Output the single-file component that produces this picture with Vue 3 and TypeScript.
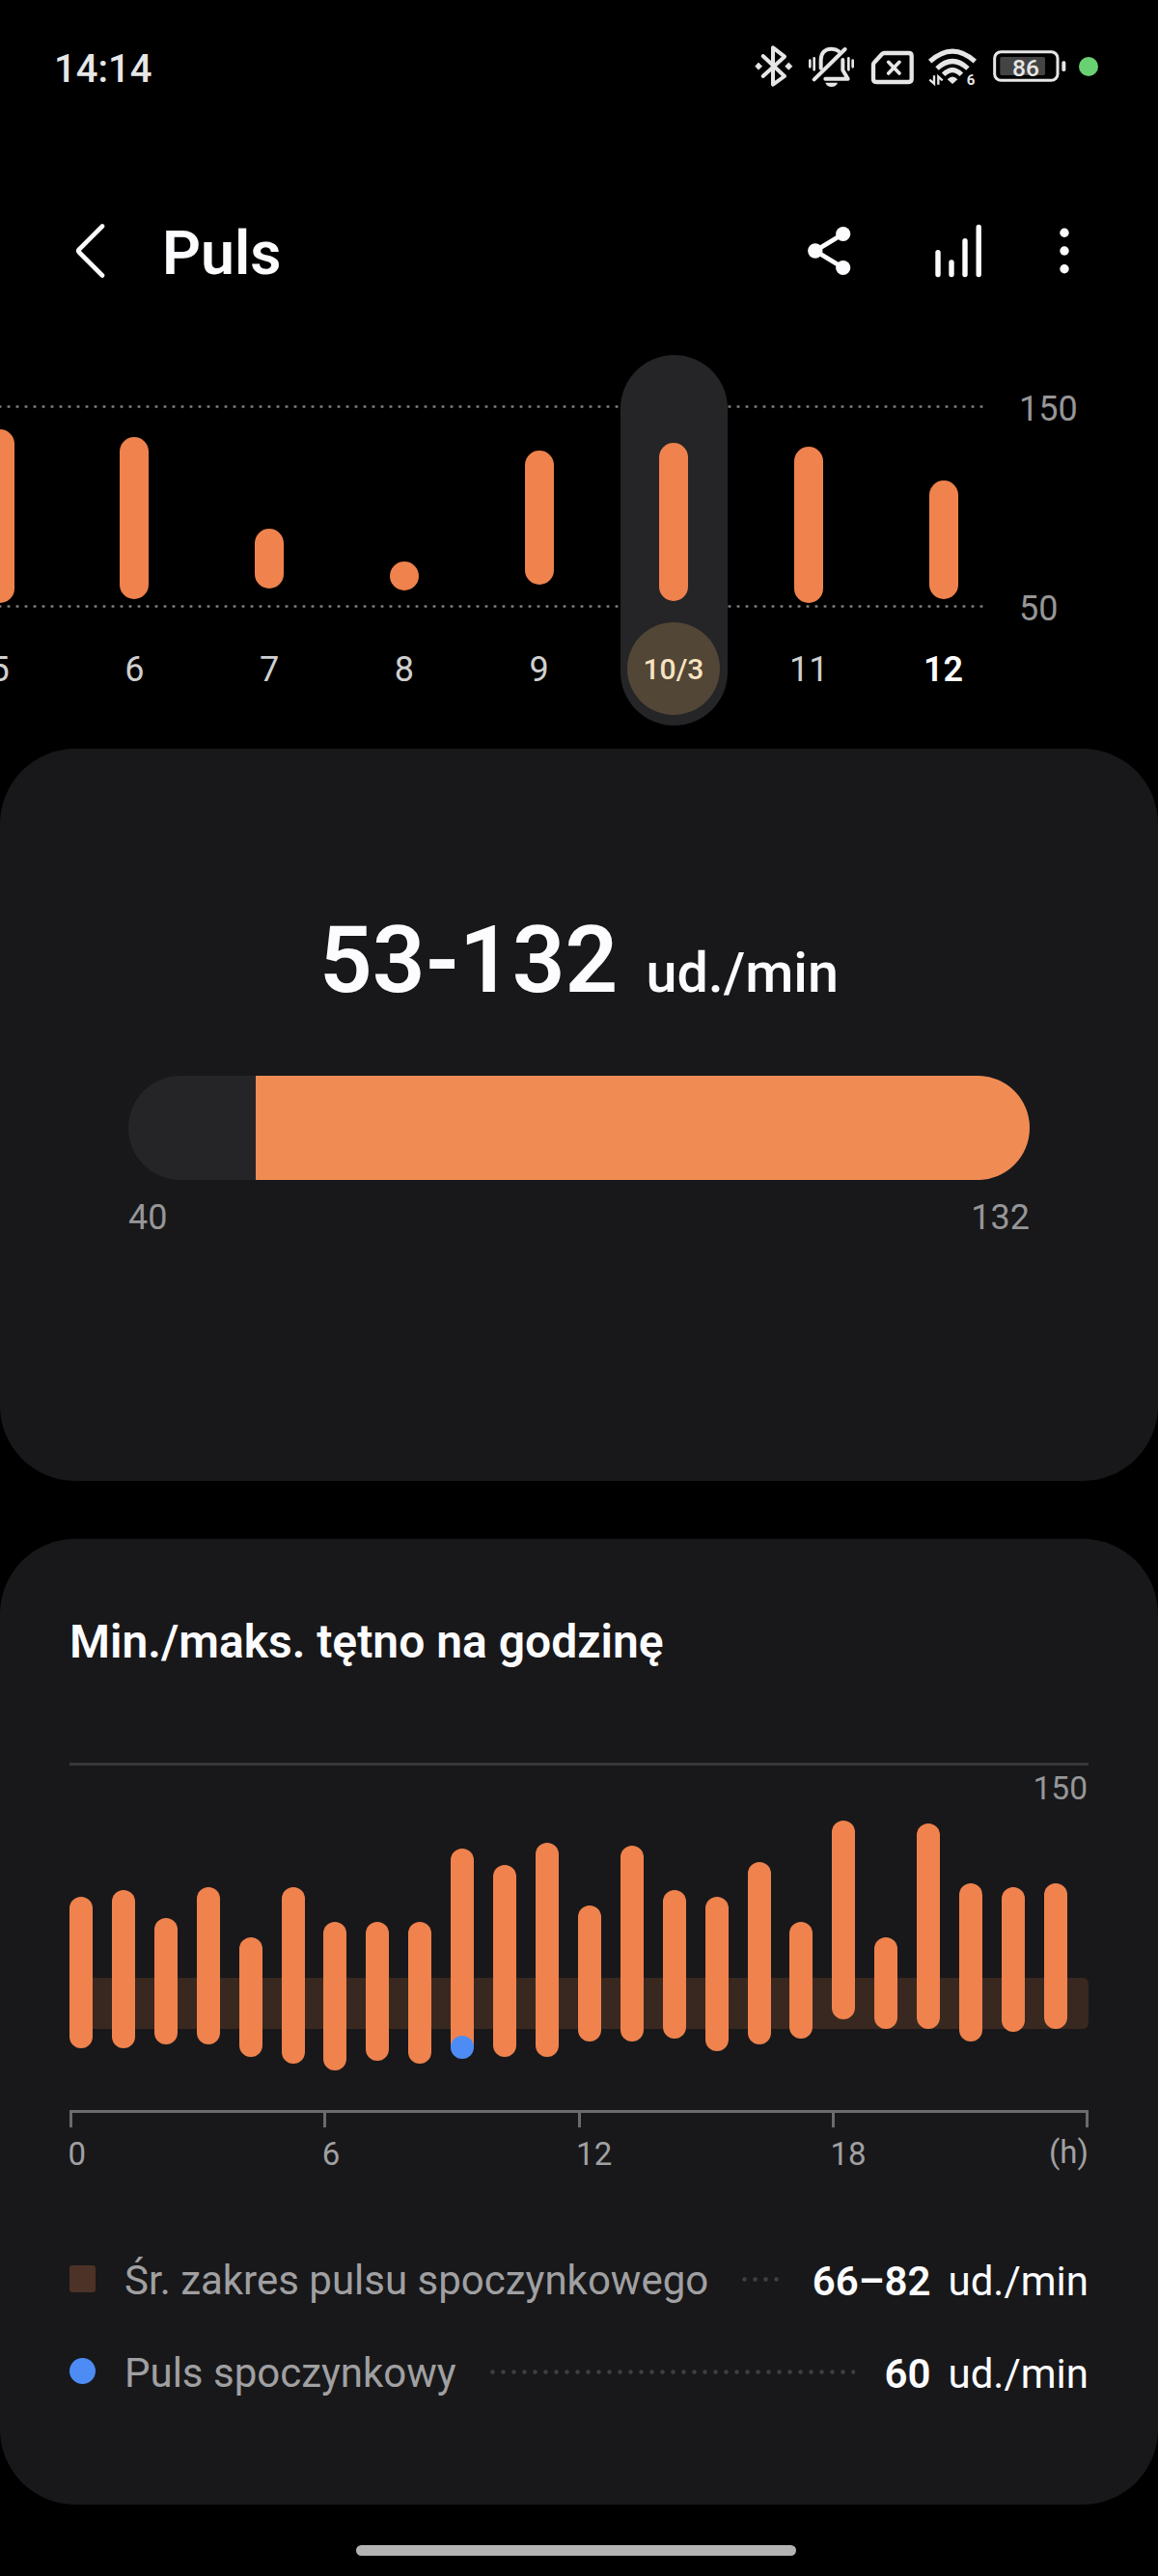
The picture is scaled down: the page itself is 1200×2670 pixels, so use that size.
<script setup lang="ts">
interface Range {
  min: number
  max: number
}

interface Day extends Range {
  label: string
  selected?: boolean
  today?: boolean
}

const days: Day[] = [
  { label: '5', min: 52, max: 139 },
  { label: '6', min: 54, max: 135.2 },
  { label: '7', min: 59, max: 89 },
  { label: '8', min: 58, max: 72.6 },
  { label: '9', min: 61, max: 128.2 },
  { label: '10/3', min: 53, max: 132, selected: true },
  { label: '11', min: 52, max: 130 },
  { label: '12', min: 54, max: 113.2, today: true },
]

const hourPairs: [number, number][] = [
  [60, 108], [60, 110], [61, 101], [61, 111], [57, 95], [55, 111],
  [53, 100], [56, 100], [55, 100], [57, 123], [57, 118], [57, 125],
  [62, 105], [62, 124], [63, 110], [59, 108], [61, 119], [63, 100],
  [69, 132], [66, 95], [66, 131], [62, 112], [65, 111], [66, 112],
]
const hours: Range[] = hourPairs.map(([min, max]) => ({ min, max }))
const restingHour = 9

const DAY_SCALE = 2.07
const HOUR_SCALE = 3.274

function barStyle(r: Range, scale: number, offset: number) {
  return {
    marginTop: `${(offset + (150 - r.max) * scale).toFixed(1)}px`,
    height: `${((r.max - r.min) * scale).toFixed(1)}px`,
  }
}

const rangeStart = ((53 - 40) / (132 - 40)) * 100
</script>

<template>
  <div class="screen">
    <header class="status">
      <span class="clock">14:14</span>
      <div class="status-icons">
        <svg width="44" height="80" viewBox="60 0 132 240">
          <path d="M92 84 L159 147 L123 173 V58 L159 86 L92 147" fill="none" stroke="#e6e6e6" stroke-width="12" stroke-linecap="round" stroke-linejoin="round" />
          <path d="M68 116 L78 105 L89 116 L78 127Z M161 116 L172 105 L183 116 L172 127Z" fill="#e6e6e6" stroke="#e6e6e6" stroke-width="2" stroke-linejoin="round" />
        </svg>
        <svg width="64" height="80" viewBox="210 0 192 240">
          <g fill="none" stroke="#e6e6e6" stroke-linecap="round" stroke-linejoin="round">
            <path d="M238 98 V118 M251 91 V127 M358 91 V127 M371 98 V118" stroke-width="8" />
            <path d="M272 122 V97 C272 73 286 62 305 62 C314 62 321 64 327 69" stroke-width="12" />
            <path d="M251 157 L347 63" stroke-width="12" />
            <path d="M340 96 V128 L356 155 H286" stroke-width="12" />
          </g>
          <path d="M286 167 H324 Q319 180 305 180 Q291 180 286 167Z" fill="#e6e6e6" />
        </svg>
        <svg width="56" height="80" viewBox="410 0 168 240">
          <g fill="none" stroke="#e6e6e6" stroke-linejoin="round" stroke-linecap="round">
            <path d="M468 75 H544 Q553 75 553 84 V156 Q553 165 544 165 H443 Q434 165 434 156 V112 Q434 107 437 104 L461 78 Q464 75 468 75Z" stroke-width="13" />
            <path d="M481 103 L515 138 M515 103 L481 138" stroke-width="11" />
          </g>
        </svg>
        <svg width="60" height="80" viewBox="595 0 180 240">
          <g fill="none" stroke="#e6e6e6" stroke-linecap="butt">
            <path d="M612 101 Q682 38 752 101" stroke-width="15" />
            <path d="M634 123 Q682 78 730 123" stroke-width="15" />
            <path d="M654 142 Q682 114 710 142" stroke-width="15" />
            <path d="M625 145 V170 L611 158 M638 173 V148 L651 160" stroke-width="7" />
          </g>
          <path d="M666 157 Q682 140 698 157 L682 171Z" fill="#e6e6e6" />
          <text x="726" y="173" class="wifi-gen">6</text>
        </svg>
        <svg width="84" height="80" viewBox="794 0 252 240">
          <rect x="811" y="71" width="196" height="89" rx="20" fill="none" stroke="#e6e6e6" stroke-width="9" />
          <rect x="828" y="87" width="140" height="57" rx="5" fill="#444" />
          <rect x="1020" y="100" width="12" height="32" rx="5" fill="#e6e6e6" />
          <text x="866" y="147" textLength="84" lengthAdjust="spacingAndGlyphs" class="battery">86</text>
        </svg>
        <i class="privacy-dot"></i>
      </div>
    </header>

    <nav class="appbar">
      <svg class="back" width="40" height="120" viewBox="0 0 40 120">
        <path d="M32 34.5 L8 58.5 Q6.5 60 8 61.5 L32 85.5" fill="none" stroke="#fcfcff" stroke-width="4.6" stroke-linecap="round" stroke-linejoin="round" />
      </svg>
      <h1>Puls</h1>
      <svg class="share" width="54" height="120" viewBox="0 0 54 120">
        <path d="M43.7 42.5 L14.8 60 L43.7 77.5" fill="none" stroke="#fcfcff" stroke-width="4.8" />
        <g fill="#fcfcff">
          <circle cx="14.8" cy="60" r="7.7" />
          <circle cx="43.7" cy="42.5" r="7.6" />
          <circle cx="43.7" cy="77.5" r="7.6" />
        </g>
      </svg>
      <svg class="trend" width="60" height="120" viewBox="0 0 60 120">
        <path d="M12 61.7 V84.5 M26 72 V84.5 M40 49.7 V84.5 M54.2 35.5 V84.5" stroke="#fcfcff" stroke-width="5.4" stroke-linecap="round" />
      </svg>
      <svg class="more" width="20" height="120" viewBox="0 0 20 120">
        <g fill="#fcfcff">
          <circle cx="10" cy="41.3" r="4.7" />
          <circle cx="10" cy="60" r="4.7" />
          <circle cx="10" cy="78.7" r="4.7" />
        </g>
      </svg>
    </nav>

    <section class="week">
      <ul class="days">
        <li v-for="d in days" :key="d.label">
          <div class="day" :class="{ selected: d.selected, today: d.today }">
            <div class="day-plot">
              <i class="day-bar" :style="barStyle(d, DAY_SCALE, 54)"></i>
            </div>
            <span class="day-label">{{ d.label }}</span>
          </div>
        </li>
      </ul>
      <div class="y-axis">
        <span>150</span>
        <span>50</span>
      </div>
    </section>

    <section class="card summary">
      <p class="headline"><span class="value">53-132</span><span class="unit">ud./min</span></p>
      <div class="range">
        <i :style="{ marginLeft: `${rangeStart}%` }"></i>
      </div>
      <div class="range-labels"><span>40</span><span>132</span></div>
    </section>

    <section class="card hourly">
      <h2>Min./maks. tętno na godzinę</h2>
      <div class="chart">
        <span class="chart-max">150</span>
        <div class="band"></div>
        <div class="bars">
          <div v-for="(h, i) in hours" :key="i" class="hour-bar" :style="barStyle(h, HOUR_SCALE, 0)">
            <i v-if="i === restingHour" class="resting"></i>
          </div>
        </div>
      </div>
      <div class="ticks"><i v-for="n in 5" :key="n"></i></div>
      <div class="hours"><span>0</span><span>6</span><span>12</span><span>18</span><span class="hour-unit">(h)</span></div>

      <div class="legend">
        <i class="key square"></i>
        <span class="name">Śr. zakres pulsu spoczynkowego</span>
        <i class="leader"></i>
        <b>66–82</b>
        <span class="legend-unit">ud./min</span>
      </div>
      <div class="legend">
        <i class="key circle"></i>
        <span class="name">Puls spoczynkowy</span>
        <i class="leader"></i>
        <b>60</b>
        <span class="legend-unit">ud./min</span>
      </div>
    </section>

    <div class="home-bar"></div>
  </div>
</template>

<style>
body {
  background: #000;
}
</style>

<style scoped>
.screen {
  width: 1200px;
  height: 2670px;
  overflow: hidden;
  background: #000;
  color: #fcfcff;
  font-family: Roboto, "Liberation Sans", sans-serif;
}
svg {
  display: block;
  flex: none;
}
h1, h2, p, ul {
  margin: 0;
  padding: 0;
}
i {
  display: block;
}

.status {
  display: flex;
  align-items: center;
  height: 80px;
  padding: 30px 62px 0 56px;
}
.clock {
  margin-top: 3px;
  font-size: 40px;
  font-weight: 500;
  line-height: 48px;
  color: #e6e6e6;
}
.status-icons {
  display: flex;
  align-items: center;
  margin-left: auto;
}
.status-icons svg:nth-child(1) { margin-right: 6px; }
.status-icons svg:nth-child(2) { margin-right: 2.67px; }
.status-icons svg:nth-child(3) { margin-right: 5.67px; }
.status-icons svg:nth-child(4) { margin-right: 6.33px; }
.status-icons svg:nth-child(5) { margin-right: 9.33px; }
.wifi-gen {
  font-size: 45px;
  font-weight: 700;
  fill: #e6e6e6;
}
.battery {
  font-size: 74px;
  font-weight: 500;
  fill: #e6e6e6;
}
.privacy-dot {
  width: 20px;
  height: 20px;
  margin-top: -2px;
  border-radius: 50%;
  background: #6ad173;
}

.appbar {
  display: flex;
  align-items: center;
  height: 120px;
  margin-top: 90px;
  padding: 0 87.3px 0 74px;
}
h1 {
  margin: 5px auto 0 54px;
  font-size: 62.5px;
  line-height: 76px;
  font-weight: 600;
}
.share { margin-right: 76px; }
.trend { margin-right: 72.7px; }

.week {
  display: flex;
  height: 408px;
  padding-top: 48px;
}
.days {
  position: relative;
  display: flex;
  width: 1048px;
  height: 384px;
  margin-right: 8px;
  overflow: hidden;
  list-style: none;
  background-image:
    radial-gradient(circle, #858585 0, #858585 0.9px, transparent 1.9px),
    radial-gradient(circle, #858585 0, #858585 0.9px, transparent 1.9px);
  background-size: 9px 5px;
  background-position: -4.5px 51px, -4.5px 258px;
  background-repeat: repeat-x;
}
.days::after {
  content: "";
  position: absolute;
  right: 0;
  top: 0;
  width: 28px;
  height: 270px;
  background: #000;
}
.days li {
  flex: none;
  display: flex;
  justify-content: center;
  width: 139.8px;
}
.days li:first-child {
  margin-left: -70.4px;
}
.day {
  display: flex;
  flex-direction: column;
  align-items: center;
  width: 111px;
  height: 384px;
  border-radius: 56px;
}
.day.selected {
  background: #252527;
}
.day-plot {
  display: flex;
  align-items: flex-start;
  height: 277.3px;
}
.day-bar {
  width: 30px;
  border-radius: 15px;
  background: #ef824d;
}
.day-label {
  width: 96px;
  height: 96px;
  border-radius: 50%;
  font-size: 36px;
  line-height: 98px;
  text-align: center;
  color: #cfcfcf;
}
.selected .day-label {
  margin-right: 1px;
  font-size: 30px;
  line-height: 97px;
  font-weight: 500;
  background: #524636;
  color: #f9e3c2;
}
.today .day-label {
  margin-right: 1px;
  font-weight: 600;
  color: #fff;
}
.y-axis {
  display: flex;
  flex-direction: column;
  gap: 167px;
  padding-top: 36px;
  font-size: 36px;
  line-height: 40px;
  color: #969698;
}

.card {
  box-sizing: border-box;
  border-radius: 78px;
  background: #18181a;
}
.summary {
  height: 759px;
  padding: 159px 133px 0;
}
.headline {
  display: flex;
  align-items: baseline;
  justify-content: center;
  height: 120px;
  line-height: 120px;
  margin-bottom: 60px;
}
.value {
  font-size: 96px;
  font-weight: 600;
}
.unit {
  margin-left: 29px;
  font-size: 57.5px;
  font-weight: 500;
}
.range {
  height: 108px;
  border-radius: 54px;
  overflow: hidden;
  background: #252527;
}
.range i {
  height: 108px;
  background: #f08c53;
}
.range-labels {
  display: flex;
  justify-content: space-between;
  margin-top: 19px;
  font-size: 36px;
  line-height: 40px;
  color: #969698;
}

.hourly {
  height: 1001px;
  margin-top: 60px;
  padding: 77px 72px 0;
}
h2 {
  font-size: 48px;
  line-height: 60px;
  font-weight: 600;
}
.chart {
  position: relative;
  box-sizing: border-box;
  height: 360px;
  margin-top: 94.5px;
  border-top: 3px solid #37373a;
}
.chart-max {
  position: absolute;
  right: 1px;
  top: 4px;
  font-size: 33.5px;
  line-height: 40px;
  color: #969698;
}
.band {
  position: absolute;
  left: 0;
  right: 0;
  top: 220.5px;
  height: 52.5px;
  border-radius: 6px;
  background: #392820;
}
.bars {
  position: relative;
  display: flex;
  align-items: flex-start;
  justify-content: space-between;
  width: 1034px;
  margin-top: -1.5px;
}
.hour-bar {
  display: flex;
  align-items: flex-end;
  width: 24px;
  border-radius: 12px;
  background: #ef824d;
}
.resting {
  width: 24px;
  height: 24px;
  margin-bottom: -2px;
  border-radius: 50%;
  background: #4d8cf5;
}
.ticks {
  display: flex;
  justify-content: space-between;
  height: 15px;
  border-top: 3px solid #6b6b6d;
}
.ticks i {
  width: 3px;
  background: #6b6b6d;
}
.hours {
  display: grid;
  grid-template-columns: 263.3px 263.3px 263.3px 1fr auto;
  margin: 8px 0 0 -1.5px;
  font-size: 33px;
  line-height: 40px;
  color: #a0a0a2;
}
.hour-unit {
  margin-top: -2px;
}
.legend {
  display: flex;
  align-items: center;
  height: 60px;
  margin-top: 36px;
  font-size: 42px;
  line-height: 60px;
}
.hours + .legend {
  margin-top: 81px;
}
.key {
  width: 27px;
  height: 28px;
  margin-top: -4px;
}
.square {
  border-radius: 3px;
  background: #4d3227;
}
.circle {
  height: 27px;
  border-radius: 50%;
  background: #4d8cf5;
}
.name {
  margin-left: 30px;
  color: #a0a0a2;
}
.leader {
  flex: 1;
  height: 5px;
  margin: -3px 31px 0 32px;
  background: radial-gradient(circle, #3f3f42 0, #3f3f42 1.7px, transparent 2.7px) 0 0 / 11px 5px repeat-x;
}
.legend b {
  padding-top: 2px;
  font-weight: 600;
}
.legend-unit {
  padding-top: 2px;
  margin-left: 18px;
}
.home-bar {
  width: 456px;
  height: 11px;
  margin: 42px 0 0 369px;
  border-radius: 6px;
  background: #b3b3b3;
}
</style>
